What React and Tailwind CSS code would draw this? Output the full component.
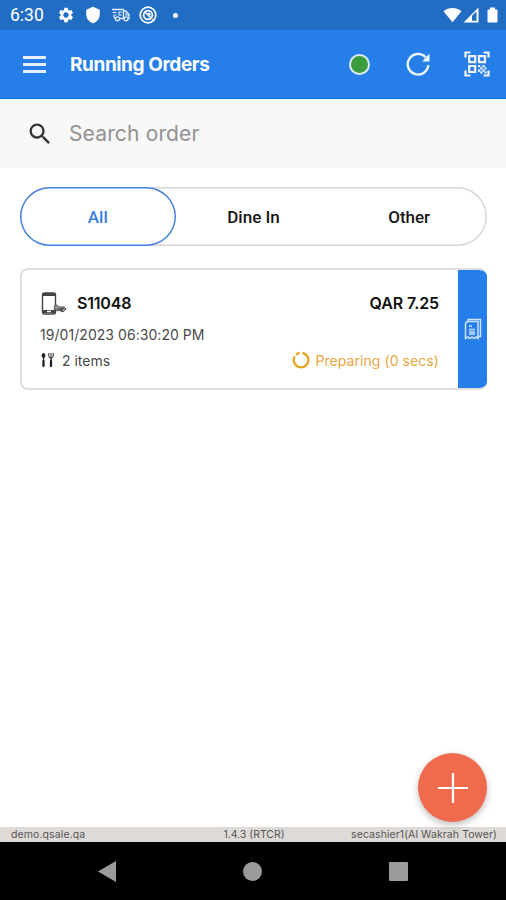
import { useState } from 'react';
import { MdSettings, MdShield, MdSearch } from 'react-icons/md';

const tabs = ['All', 'Dine In', 'Other'];

const StatusBar = () => (
  <div className="flex h-[30px] shrink-0 items-center justify-between bg-[#226dc4] pl-[10px] pr-[7px] text-white">
    <div className="flex items-center">
      <span className="w-[47px] pt-[2px] font-['Roboto',sans-serif] text-[17.5px] leading-none">6:30</span>
      <MdSettings className="size-[18px]" />
      <MdShield className="ml-[9px] size-[18px]" />
      {/* Delivery van */}
      <svg className="ml-[9px] h-[14px] w-[19px]" viewBox="0 0 19 14" fill="none" stroke="#e3eefb" strokeWidth="1.3">
        <path d="M1 1.5h11.5v9H9M4 10.5l-1.5-3M12.5 3H15l3 3.5v4h-1M12.5 10.5h1" />
        <path d="M1.5 4.5h4M2.5 7h3M8 4h3M8 4v3h3M15 4.5V7h3" strokeWidth="1.1" />
        <circle cx="6.5" cy="10.8" r="2" />
        <circle cx="15" cy="10.8" r="2" />
      </svg>
      <svg className="ml-[9px] size-[18px]" viewBox="0 0 18 18" fill="none" stroke="currentColor">
        <circle cx="9" cy="9" r="7.8" strokeWidth="1.7" />
        <circle cx="9" cy="9" r="4.4" strokeWidth="1.7" />
        <path d="M5.7 5.7l6.6 6.6M9 7.2a2 2 0 0 1 2 2M13 13.5l2 1.5" strokeWidth="1.6" />
      </svg>
      <span className="ml-[16px] size-[5px] rounded-full bg-white" />
    </div>
    <svg className="h-[18px] w-[56px]" viewBox="0 0 56 18" fill="currentColor">
      <path d="M0.5 5.2C6 .9 13 .9 18.5 5.2L9.5 16.2z" />
      <path fillRule="evenodd" d="M20.5 16.5L35.5 1.5v15zM29 9.8v4.9h4.5V5.5z" />
      <path d="M47 1.5h5v2h1.5q1 0 1 1v11q0 1-1 1h-8q-1 0-1-1v-11q0-1 1-1H47z" />
    </svg>
  </div>
);

const QrIcon = () => (
  <svg className="size-[26px]" viewBox="0 0 26 26" fill="none" stroke="#f0f3ff" strokeWidth="2.2">
    <path d="M1.5 6.5v-5h5M19.5 1.5h5v5M1.5 19.5v5h5M19.5 24.5h5v-5" />
    <path d="M5.2 5.2h6v6h-6zM15 5.2h6v6h-6zM5.2 15h6v6h-6z" />
    <path fill="#f0f3ff" stroke="none" d="M14 14h2.3v2.3H14zM18.4 14h2.3v2.3h-2.3zM16.2 16.2h2.3v2.3h-2.3zM20.5 16.2h2v2.3h-2zM14 18.4h2.3v2.3H14zM18.4 18.4h2.3v2.3h-2.3zM16.2 20.6h2.3v2h-2.3zM20.5 20.6h2v2h-2z" />
  </svg>
);

const Header = () => (
  <header className="flex h-[69px] shrink-0 items-center border-b border-[#1070e0] bg-[#267fe8] pl-[23px] pr-[16px] text-white">
    <button className="flex w-[23px] flex-col gap-[4px]" aria-label="Menu">
      <span className="h-[3px] w-full bg-[#e4eeff]" />
      <span className="h-[3px] w-full bg-[#e4eeff]" />
      <span className="h-[3px] w-full bg-[#e4eeff]" />
    </button>
    <h1 className="ml-[24px] pt-[3px] text-[19px] font-bold tracking-[-0.4px]">Running Orders</h1>
    <div className="ml-auto flex items-center">
      <span className="size-[21px] rounded-full border-2 border-[#d9eaf0] bg-[#3c9d40]" />
      <svg className="ml-[36px] size-[24px]" viewBox="0 0 24 24" fill="none" stroke="#edf5ff" strokeWidth="2.4">
        <path d="M22.3 13.2A10.3 10.3 0 1 1 19.6 5.2" />
        <path fill="#edf5ff" stroke="none" d="M23.5 1.5v8H16z" />
      </svg>
      <div className="ml-[34px]">
        <QrIcon />
      </div>
    </div>
  </header>
);

const OrderCard = () => (
  <div className="mr-[19px] ml-5 mt-[22px] flex h-[122px] overflow-hidden rounded-[8px] border-2 border-r-0 border-[#dedede]">
    <div className="flex flex-1 flex-col pl-[18px] pr-[19px] pt-[20px] text-[#4a4a4a]">
      <div className="flex h-[26px] items-center text-[#111]">
        <svg className="h-[25px] w-[27px]" viewBox="0 0 27 25" fill="none" stroke="#444">
          <rect x="2.5" y="2" width="13" height="21" rx="2" strokeWidth="1.4" />
          <path d="M2.5 3.5h13M3 20.5h12" strokeWidth="3" />
          <path d="M7 20.5h4" stroke="#fff" strokeWidth="1.5" />
          <path d="M15 14c2-1 3 2 5 2h4l2 2-3 3-3-2-2 1-4-2z" fill="#999" strokeWidth=".9" />
          <path d="M17 18h5l-1 3M20 19l4-2" strokeWidth="1.1" />
        </svg>
        <span className="ml-[10px] text-[16px] font-semibold tracking-[-0.2px]">S11048</span>
        <span className="ml-auto text-[16px] font-semibold tracking-[-0.1px]">QAR 7.25</span>
      </div>
      <div className="mt-[7px] h-[24px] text-[14px] leading-[24px] tracking-[0.05px]">19/01/2023 06:30:20 PM</div>
      <div className="flex h-[26px] items-center text-[14px]">
        <svg className="h-[16px] w-[15px]" viewBox="0 0 15 16" fill="none" stroke="#222" strokeLinecap="round">
          <ellipse cx="3.5" cy="3.5" rx="1.9" ry="2.6" fill="#222" stroke="none" />
          <path d="M3.5 6v3M11 6v3" strokeWidth="1.2" />
          <path d="M3.5 9v5M11 9v5" strokeWidth="2.3" />
          <path d="M8.8 1.5v2.8q0 1.5 2.2 1.5t2.2-1.5V1.5M11 1.5V6" strokeWidth="1" />
        </svg>
        <span className="ml-[7px]">2 items</span>
        <div className="ml-auto flex items-center text-[#eba63f]">
          {/* Progress ring, open at the top */}
          <svg className="size-[18px]" viewBox="0 0 18 18" fill="none" stroke="#e9a11c" strokeWidth="2.2">
            <path d="M10.3 1.8A7.3 7.3 0 1 1 2.8 5.2M4 3.7A7.3 7.3 0 0 1 7.7 1.8" />
          </svg>
          <span className="ml-[5px] tracking-[0.07px]">Preparing (0 secs)</span>
        </div>
      </div>
    </div>
    <button className="-my-[1px] flex w-[29px] items-center justify-center bg-[#267fe8]" aria-label="Receipt">
      <svg className="h-[23px] w-[18px]" viewBox="0 0 18 23" fill="none" stroke="#cfe1ff" strokeWidth="1.5">
        <path d="M4 3V1.5h12.5v17H14" />
        <path d="M1.5 20.5V6.5q0-3 3-3H14v17l-2-1.5-2 1.5L8 19l-2 1.5L4 19z" />
        <path d="M5 8h3M5 11.5h6M5 14h6M5 16h6" strokeWidth="1.6" />
      </svg>
    </button>
  </div>
);

const App = () => {
  const [active, setActive] = useState('All');

  return (
    <div className="relative flex h-[900px] w-[506px] flex-col overflow-hidden bg-white font-['Inter',sans-serif]">
      <StatusBar />
      <Header />

      {/* Search */}
      <div className="flex h-[69px] shrink-0 items-center bg-[#f8f8f8] pl-[26px]">
        <MdSearch className="size-[28px] text-[#333]" />
        <input
          type="text"
          placeholder="Search order"
          className="ml-[15px] w-[360px] bg-transparent text-[21px] tracking-[0.15px] placeholder-[#929292] outline-none"
        />
      </div>

      {/* Order type filter */}
      <div className="mr-[19px] ml-5 mt-[19px] grid h-[59px] shrink-0 grid-cols-3 rounded-full font-['Roboto',sans-serif] text-[17px] font-medium ring-[1.5px] ring-inset ring-[#d6d6d6]">
        {tabs.map((tab) => (
          <button
            key={tab}
            onClick={() => setActive(tab)}
            className={
              tab === active
                ? 'rounded-full bg-white pt-[2px] text-[#3680df] ring-[1.5px] ring-inset ring-[#4581df]'
                : 'pt-[2px] text-[#161616]'
            }
          >
            {tab}
          </button>
        ))}
      </div>

      <OrderCard />

      <footer className="mt-auto grid h-[15px] shrink-0 grid-cols-3 items-center bg-[#dedad7] pl-[11px] pr-[9px] pt-[2px] text-[10.5px] leading-none whitespace-nowrap text-[#555]">
        <span className="tracking-[0.1px]">demo.qsale.qa</span>
        <span className="text-center">1.4.3 (RTCR)</span>
        <span className="justify-self-end tracking-[0.08px]">secashier1(Al Wakrah Tower)</span>
      </footer>

      {/* Android navigation */}
      <nav className="flex h-[58px] shrink-0 items-center justify-center gap-[127px] bg-black">
        <svg className="h-[21px] w-[18px]" viewBox="0 0 18 21" fill="#9b9b9b">
          <path d="M18 0v21L0 10.5z" />
        </svg>
        <span className="size-[19px] rounded-full bg-[#9b9b9b]" />
        <span className="size-[19px] rounded-[1px] bg-[#9b9b9b]" />
      </nav>

      <button
        className="absolute right-[19px] bottom-[78px] flex size-[69px] items-center justify-center rounded-full bg-[#f06a4d] shadow-[0_3px_7px_rgba(0,0,0,0.25)]"
        aria-label="New order"
      >
        <svg className="size-[30px]" viewBox="0 0 30 30" stroke="#fff" strokeWidth="2.2">
          <path d="M15 0v30M0 15h30" />
        </svg>
      </button>
    </div>
  );
};

export default App;
